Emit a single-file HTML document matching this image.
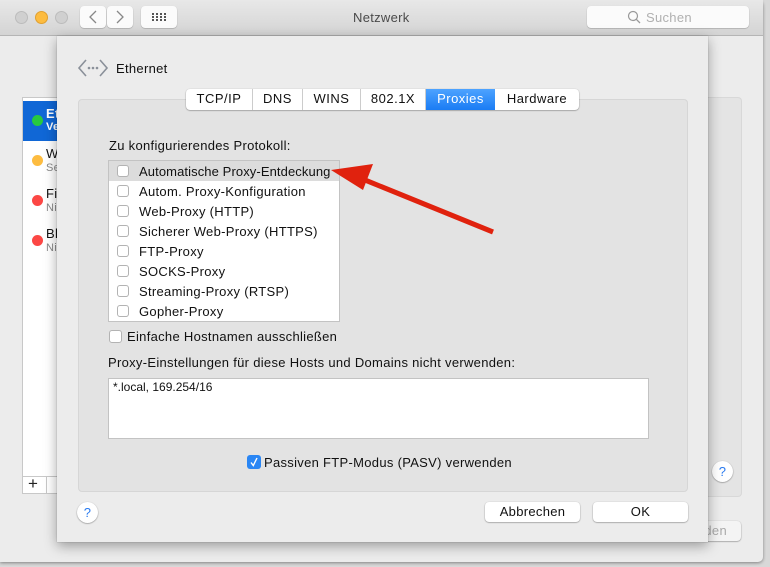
<!DOCTYPE html><html><head><style>
*{box-sizing:border-box;margin:0;padding:0}
body{width:770px;height:567px;overflow:hidden;background:#d8d8d8;font-family:"Liberation Sans",sans-serif;font-size:13px;letter-spacing:0.3px;color:#111;position:relative}
.abs{position:absolute}
.win{left:0;top:0;width:763px;height:562px;background:#ececec;border-radius:0 5px 5px 0;box-shadow:0 1px 3px rgba(0,0,0,.4)}
.title{left:0;top:0;width:763px;height:36px;background:linear-gradient(#e8e8e8,#d4d4d4);border-bottom:1px solid #b5b5b5}
.dot{width:13px;height:13px;border-radius:50%}
.btn{background:#fbfbfb;border-radius:4px;box-shadow:0 0.5px 1px rgba(0,0,0,.3)}
.row{position:absolute;left:0;width:140px;height:40px}
.sd{position:absolute;left:9px;width:11px;height:11px;border-radius:50%}
.cb{position:absolute;width:12px;height:12px;border:1px solid #b3b3b3;border-radius:3px;background:#fff}
.li{position:absolute;left:0;width:230px;height:20px}
.li span{position:absolute;left:30px;top:3px}
.tab{position:absolute;top:0;height:21px;line-height:20px;text-align:center;border-right:1px solid #ccc}
.pb{position:absolute;background:#fff;border-radius:4px;box-shadow:0 0.5px 1.5px rgba(0,0,0,.45);text-align:center;line-height:20px}
.help{position:absolute;width:21px;height:21px;border-radius:50%;background:#fff;box-shadow:0 0.5px 1.5px rgba(0,0,0,.45);color:#2a7bf0;text-align:center;line-height:21px;font-size:13px}
</style></head><body>
<div class="abs win"></div>
<div class="abs title"></div>
<div class="abs dot" style="left:15px;top:11px;background:#d0d0d0;border:1px solid #bcbcbc"></div>
<div class="abs dot" style="left:35px;top:11px;background:#fdbc40;border:1px solid #e0a030"></div>
<div class="abs dot" style="left:55px;top:11px;background:#d0d0d0;border:1px solid #bcbcbc"></div>
<div class="abs btn" style="left:80px;top:6px;width:26px;height:22px"></div>
<div class="abs btn" style="left:107px;top:6px;width:26px;height:22px"></div>
<svg class="abs" style="left:80px;top:6px" width="53" height="22"><path d="M16 5 L10 11 L16 17" fill="none" stroke="#888" stroke-width="1.3"/><path d="M37 5 L43 11 L37 17" fill="none" stroke="#888" stroke-width="1.3"/></svg>
<div class="abs btn" style="left:141px;top:6px;width:36px;height:22px"></div>
<svg class="abs" style="left:141px;top:6px" width="36" height="22"><g fill="#555"><rect x="11" y="7" width="2" height="2"/><rect x="15" y="7" width="2" height="2"/><rect x="19" y="7" width="2" height="2"/><rect x="23" y="7" width="2" height="2"/><rect x="11" y="10" width="2" height="2"/><rect x="15" y="10" width="2" height="2"/><rect x="19" y="10" width="2" height="2"/><rect x="23" y="10" width="2" height="2"/><rect x="11" y="13" width="2" height="2"/><rect x="15" y="13" width="2" height="2"/><rect x="19" y="13" width="2" height="2"/><rect x="23" y="13" width="2" height="2"/></g></svg>
<div class="abs" style="left:353px;top:10px;font-size:13px;color:#4a4a4a">Netzwerk</div>
<div class="abs btn" style="left:587px;top:6px;width:162px;height:22px"></div>
<svg class="abs" style="left:627px;top:10px" width="14" height="14"><circle cx="6" cy="6" r="4.5" fill="none" stroke="#999" stroke-width="1.2"/><path d="M9.3 9.3 L13 13" stroke="#999" stroke-width="1.3"/></svg>
<div class="abs" style="left:646px;top:10px;color:#b0b0b0">Suchen</div>

<div class="abs" style="left:22px;top:97px;width:50px;height:381px;background:#fff;border:1px solid #c8c8c8;overflow:hidden">
 <div class="row" style="top:3px;background:#1067d6"><div class="sd" style="top:14px;background:#27c93f"></div><div class="abs" style="left:23px;top:5px;color:#fff;font-weight:bold">Et</div><div class="abs" style="left:23px;top:20px;color:#fff;font-size:11px;font-weight:bold">Ve</div></div>
 <div class="row" style="top:43px"><div class="sd" style="top:14px;background:#fdbc40"></div><div class="abs" style="left:23px;top:5px">W</div><div class="abs" style="left:23px;top:21px;color:#888;font-size:11px">Se</div></div>
 <div class="row" style="top:83px"><div class="sd" style="top:14px;background:#fc4744"></div><div class="abs" style="left:23px;top:5px">Fi</div><div class="abs" style="left:23px;top:21px;color:#888;font-size:11px">Ni</div></div>
 <div class="row" style="top:123px"><div class="sd" style="top:14px;background:#fc4744"></div><div class="abs" style="left:23px;top:5px">Bl</div><div class="abs" style="left:23px;top:21px;color:#888;font-size:11px">Ni</div></div>
</div>
<div class="abs" style="left:22px;top:476px;width:40px;height:18px;background:#fff;border:1px solid #c8c8c8"></div>
<div class="abs" style="left:28px;top:474px;font-size:17px;color:#222">+</div>
<div class="abs" style="left:46px;top:476px;width:1px;height:18px;background:#c8c8c8"></div>
<div class="abs" style="left:708px;top:97px;width:34px;height:400px;background:#e4e4e4;border-radius:0 4px 4px 0;border:1px solid #d8d8d8;border-left:none"></div>
<div class="help" style="left:712px;top:461px">?</div>
<div class="pb" style="left:700px;top:521px;width:41px;height:20px;color:#aaa;background:#f4f4f4;text-align:right;padding-right:14px">den</div>

<div class="abs" style="left:57px;top:36px;width:651px;height:506px;background:#ececec;box-shadow:0 4px 12px rgba(0,0,0,.35),0 0 1px rgba(0,0,0,.3)"></div>
<svg class="abs" style="left:77px;top:57px" width="32" height="22"><path d="M9 3 L2 11 L9 19" fill="none" stroke="#8a9099" stroke-width="1.6"/><path d="M23 3 L30 11 L23 19" fill="none" stroke="#8a9099" stroke-width="1.6"/><circle cx="12" cy="11" r="1.3" fill="#8a9099"/><circle cx="16" cy="11" r="1.3" fill="#8a9099"/><circle cx="20" cy="11" r="1.3" fill="#8a9099"/></svg>
<div class="abs" style="left:116px;top:61px">Ethernet</div>
<div class="abs" style="left:78px;top:99px;width:610px;height:393px;background:#e3e3e3;border:1px solid #d6d6d6;border-radius:4px"></div>
<div class="abs" style="left:186px;top:89px;width:393px;height:21px;background:#fff;border-radius:4px;box-shadow:0 0.5px 1.5px rgba(0,0,0,.45);overflow:hidden;letter-spacing:0.5px">
 <div class="tab" style="left:0;width:67px">TCP/IP</div>
 <div class="tab" style="left:67px;width:50px">DNS</div>
 <div class="tab" style="left:117px;width:58px">WINS</div>
 <div class="tab" style="left:175px;width:65px">802.1X</div>
 <div class="tab" style="left:240px;width:69px;background:linear-gradient(#4da3ff,#1a7cf4);color:#fff;border:none">Proxies</div>
 <div class="tab" style="left:309px;width:84px;border:none">Hardware</div>
</div>
<div class="abs" style="left:109px;top:138px">Zu konfigurierendes Protokoll:</div>
<div class="abs" style="left:108px;top:160px;width:232px;height:162px;background:#fff;border:1px solid #c3c3c3">
 <div class="li" style="top:0;background:#dcdcdc"><div class="cb" style="left:8px;top:4px"></div><span style="letter-spacing:0.1px">Automatische Proxy-Entdeckung</span></div>
 <div class="li" style="top:20px"><div class="cb" style="left:8px;top:4px"></div><span>Autom. Proxy-Konfiguration</span></div>
 <div class="li" style="top:40px"><div class="cb" style="left:8px;top:4px"></div><span>Web-Proxy (HTTP)</span></div>
 <div class="li" style="top:60px"><div class="cb" style="left:8px;top:4px"></div><span>Sicherer Web-Proxy (HTTPS)</span></div>
 <div class="li" style="top:80px"><div class="cb" style="left:8px;top:4px"></div><span>FTP-Proxy</span></div>
 <div class="li" style="top:100px"><div class="cb" style="left:8px;top:4px"></div><span>SOCKS-Proxy</span></div>
 <div class="li" style="top:120px"><div class="cb" style="left:8px;top:4px"></div><span>Streaming-Proxy (RTSP)</span></div>
 <div class="li" style="top:140px"><div class="cb" style="left:8px;top:4px"></div><span>Gopher-Proxy</span></div>
</div>
<svg class="abs" style="left:325px;top:160px" width="175" height="80"><path d="M168 72 L40 20" stroke="#e0220e" stroke-width="5"/><path d="M6 10 L48 4 L38 30 Z" fill="#e0220e"/></svg>
<div class="cb" style="left:109px;top:330px;width:13px;height:13px"></div>
<div class="abs" style="left:127px;top:329px">Einfache Hostnamen ausschließen</div>
<div class="abs" style="left:108px;top:355px">Proxy-Einstellungen für diese Hosts und Domains nicht verwenden:</div>
<div class="abs" style="left:108px;top:378px;width:541px;height:61px;background:#fff;border:1px solid #c3c3c3"></div>
<div class="abs" style="left:113px;top:380px;font-size:12px;letter-spacing:0">*.local, 169.254/16</div>
<div class="abs" style="left:247px;top:455px;width:14px;height:14px;border-radius:3px;background:#2a86f4"></div>
<svg class="abs" style="left:247px;top:455px" width="14" height="14"><path d="M4 7.5 L6.3 10.5 L10 3" fill="none" stroke="#fff" stroke-width="1.4"/></svg>
<div class="abs" style="left:264px;top:455px">Passiven FTP-Modus (PASV) verwenden</div>
<div class="help" style="left:77px;top:502px">?</div>
<div class="pb" style="left:485px;top:502px;width:95px;height:20px">Abbrechen</div>
<div class="pb" style="left:593px;top:502px;width:95px;height:20px">OK</div>
</body></html>
